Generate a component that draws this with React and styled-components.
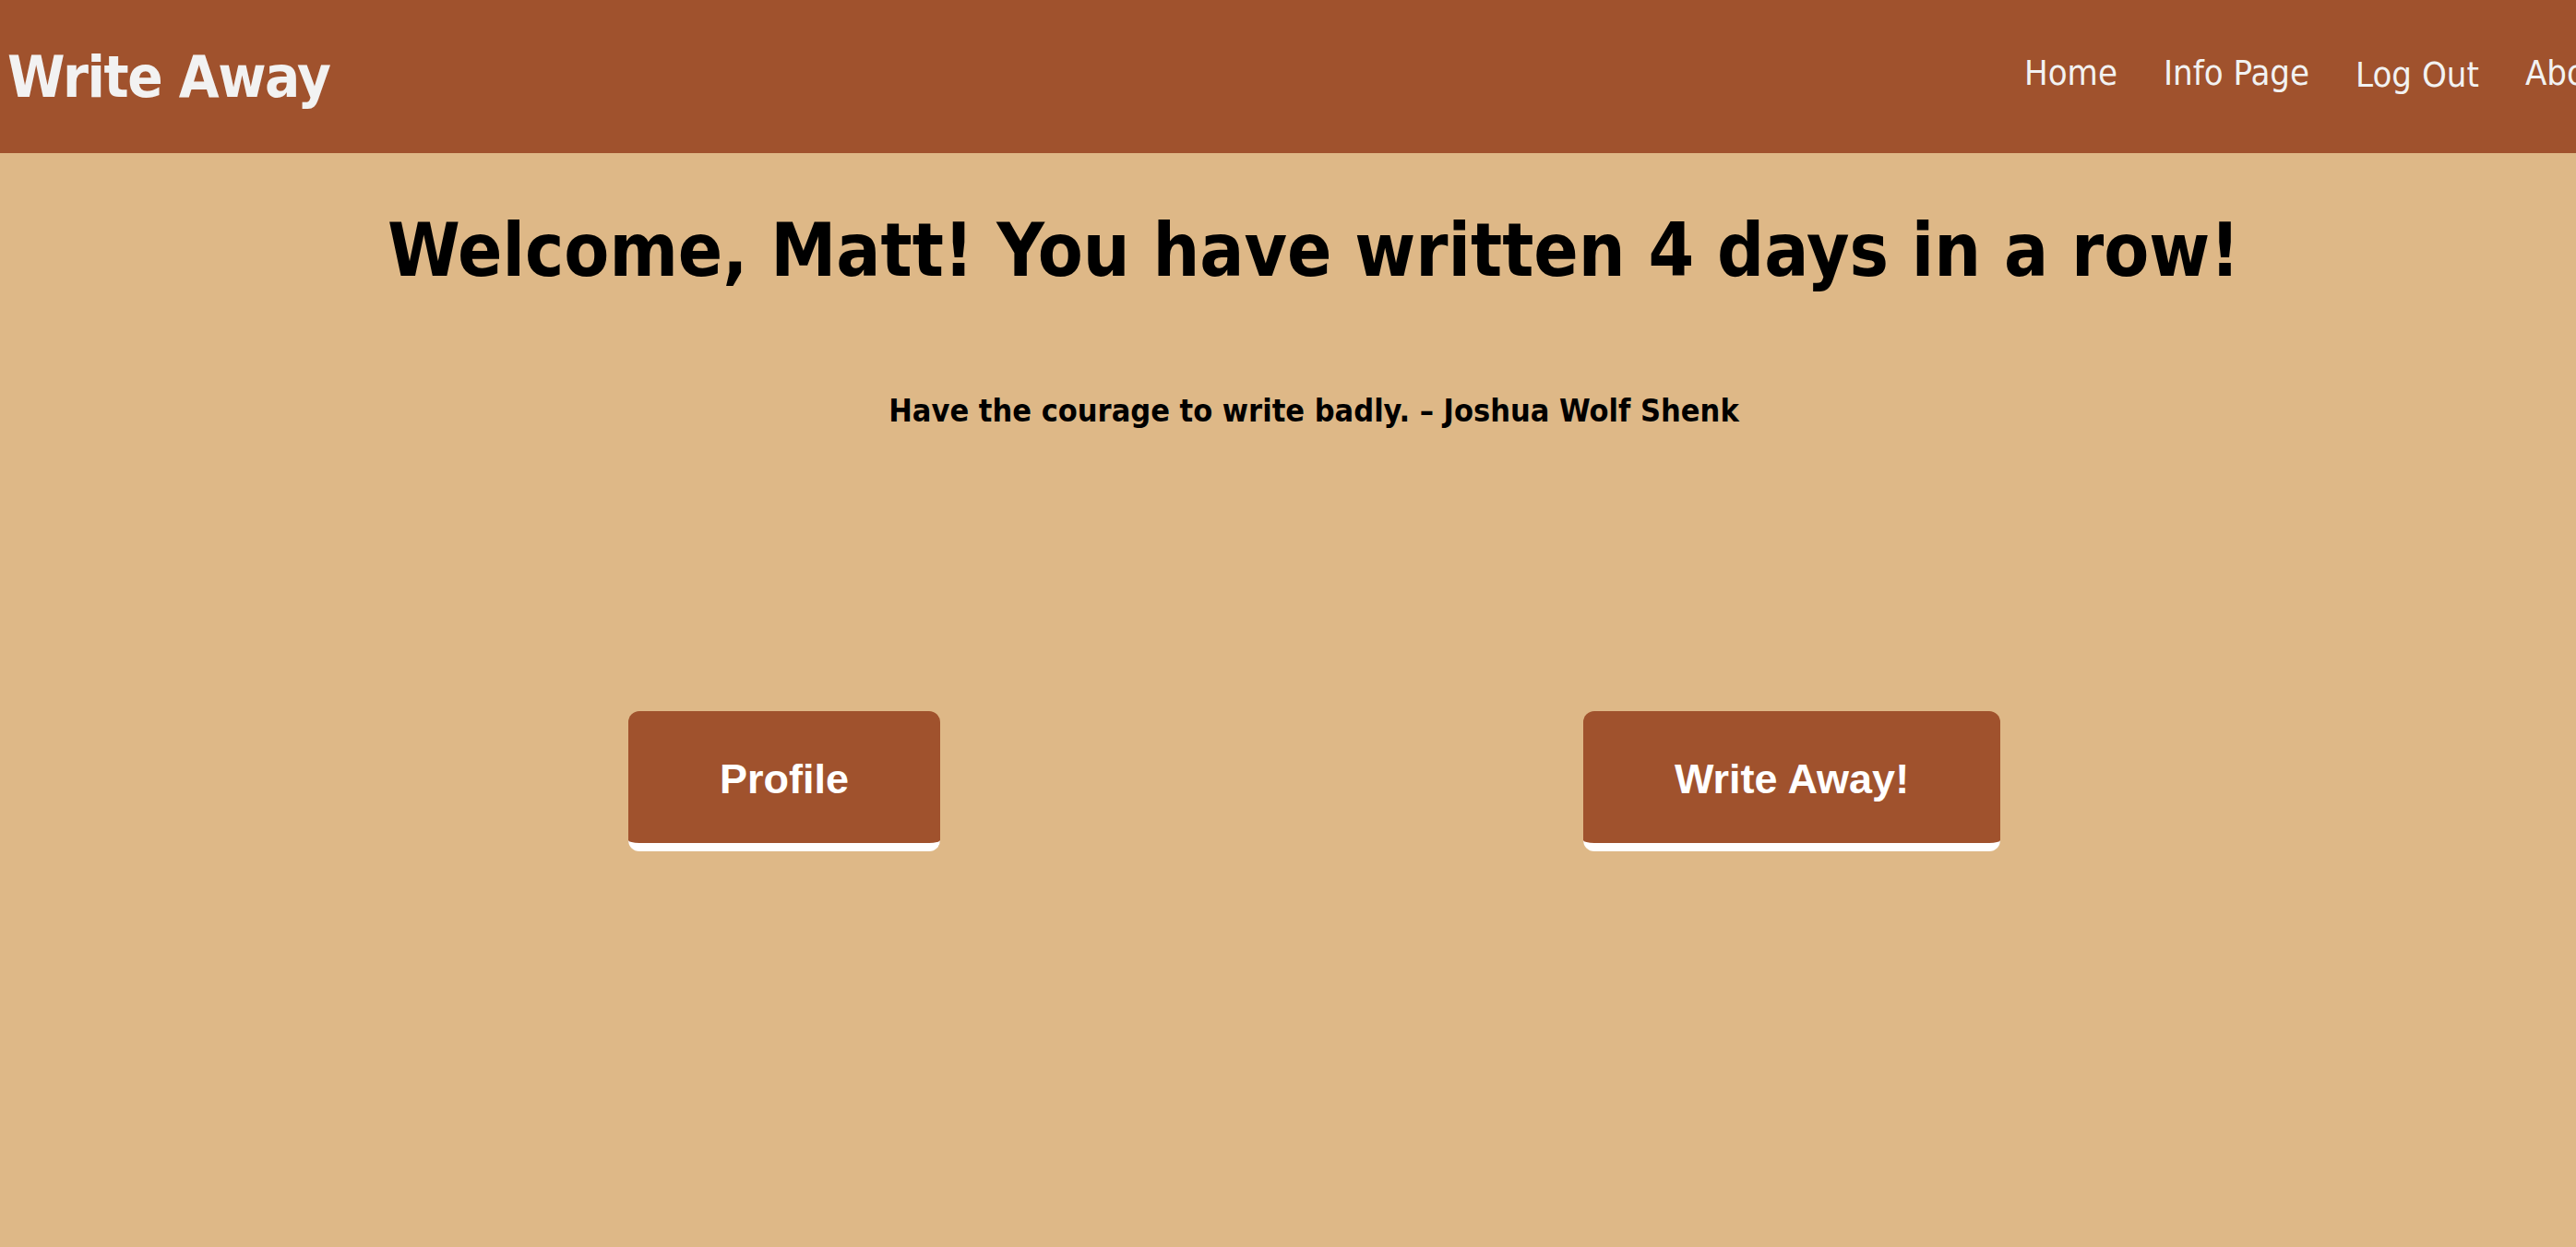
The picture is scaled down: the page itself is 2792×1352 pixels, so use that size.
import React from "react";
import styled, { createGlobalStyle } from "styled-components";

const GlobalStyle = createGlobalStyle`
  html, body {
    margin: 0;
    padding: 0;
    background: burlywood;
    overflow: hidden;
  }
  body {
    font-family: "DejaVu Sans Condensed", "DejaVu Sans", sans-serif;
    min-height: 1352px;
  }
`;

const Page = styled.div`
  display: flex;
  flex-direction: column;
  min-height: 1352px;
  background: burlywood;
`;

const Header = styled.header`
  display: flex;
  align-items: center;
  justify-content: space-between;
  height: 166px;
  background: sienna;
  padding-left: 8px;
  overflow: hidden;
`;

const Logo = styled.div`
  font-family: "DejaVu Sans Condensed", "DejaVu Sans", Verdana, sans-serif;
  font-stretch: condensed;
  font-weight: bold;
  font-size: 63px;
  letter-spacing: -1.4px;
  line-height: 1;
  color: #f2f2f2;
  white-space: nowrap;
`;

const Nav = styled.nav`
  display: flex;
  align-items: center;
  gap: 50px;
  margin-right: -46px;
  padding-bottom: 8px;
  flex-shrink: 0;
`;

const NavLink = styled.a`
  font-family: "DejaVu Sans Condensed", "DejaVu Sans", sans-serif;
  font-stretch: condensed;
  font-size: 38px;
  line-height: 1;
  color: #f2f2f2;
  text-decoration: none;
  white-space: nowrap;
  margin-top: ${(p) => (p.$low ? "4px" : "0")};
`;

const Main = styled.main`
  display: flex;
  flex-direction: column;
  align-items: center;
`;

const Title = styled.h1`
  margin: 66px 0 0;
  padding-left: 56px;
  font-family: "DejaVu Sans Condensed", "DejaVu Sans", sans-serif;
  font-stretch: condensed;
  font-weight: bold;
  font-size: 79.4px;
  line-height: 1;
  color: #000;
  white-space: nowrap;
`;

const Quote = styled.p`
  margin: 117px 0 0;
  padding-left: 56px;
  font-family: "DejaVu Sans Condensed", "DejaVu Sans", sans-serif;
  font-stretch: condensed;
  font-weight: bold;
  font-size: 34px;
  line-height: 1;
  color: #000;
  white-space: nowrap;
`;

const ButtonRow = styled.div`
  display: grid;
  grid-template-columns: 1fr 1fr;
  justify-items: center;
  width: 2184px;
  margin-top: 309px;
`;

const ActionButton = styled.button`
  font-family: "Liberation Sans", Arial, Helvetica, sans-serif;
  font-weight: bold;
  font-size: 45px;
  line-height: 52px;
  color: #fff;
  background: sienna;
  border: none;
  border-bottom: 9px solid #fff;
  border-radius: 12px;
  padding: 48px 99px 43px;
  cursor: pointer;
  white-space: nowrap;
`;

export default function App() {
  return (
    <Page>
      <GlobalStyle />
      <Header>
        <Logo>Write Away</Logo>
        <Nav>
          <NavLink href="#">Home</NavLink>
          <NavLink href="#">Info Page</NavLink>
          <NavLink href="#" $low>Log Out</NavLink>
          <NavLink href="#">About</NavLink>
        </Nav>
      </Header>
      <Main>
        <Title>Welcome, Matt! You have written 4 days in a row!</Title>
        <Quote>Have the courage to write badly. – Joshua Wolf Shenk</Quote>
        <ButtonRow>
          <ActionButton>Profile</ActionButton>
          <ActionButton>Write Away!</ActionButton>
        </ButtonRow>
      </Main>
    </Page>
  );
}
